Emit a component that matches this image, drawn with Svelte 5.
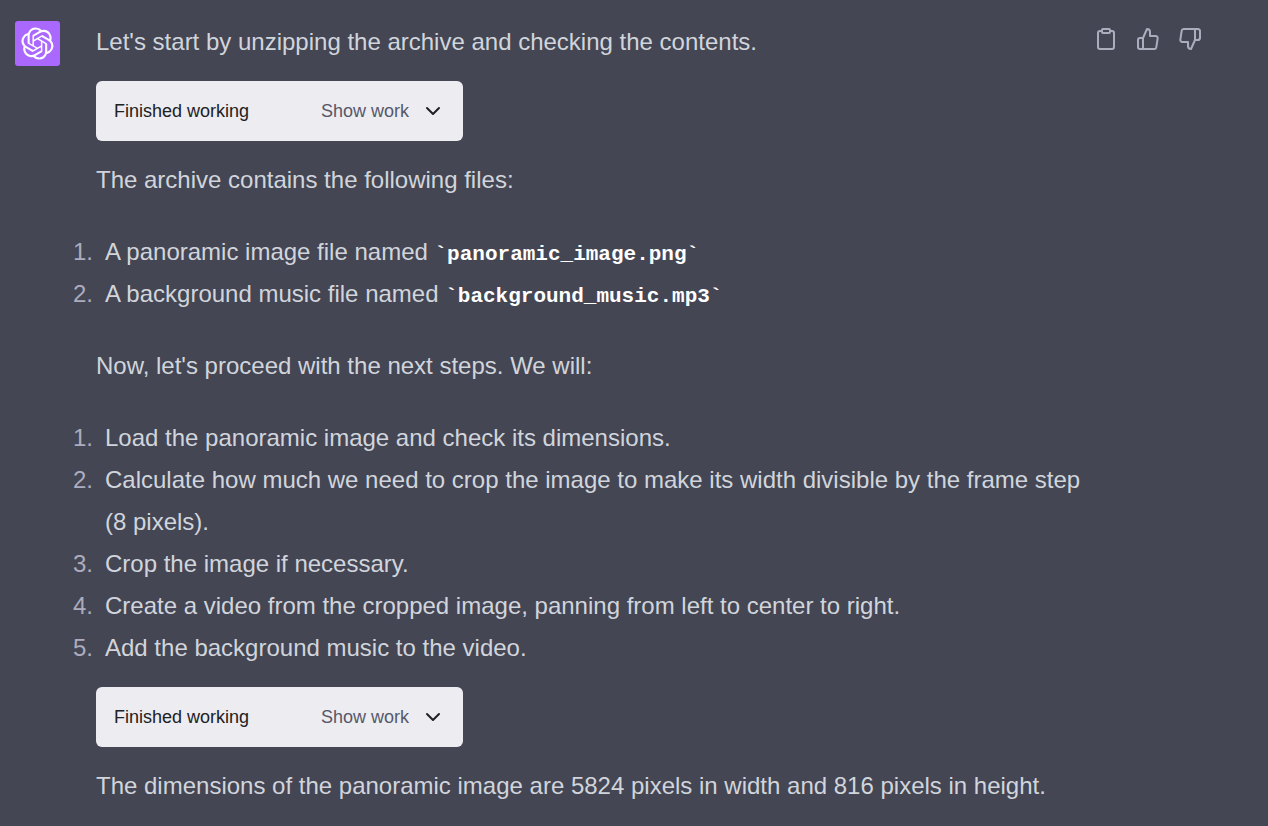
<script>
  const files = [
    ['A panoramic image file named', 'panoramic_image.png'],
    ['A background music file named', 'background_music.mp3'],
  ];
  const steps = [
    'Load the panoramic image and check its dimensions.',
    'Calculate how much we need to crop the image to make its width divisible by the frame step (8 pixels).',
    'Crop the image if necessary.',
    'Create a video from the cropped image, panning from left to center to right.',
    'Add the background music to the video.',
  ];
</script>

{#snippet work()}
  <div class="work">
    <span>Finished working</span>
    <button type="button" class="show">
      Show work
      <svg width="20" height="20" viewBox="0 0 20 20" fill="none" stroke="#202123" stroke-width="2" stroke-linecap="round" stroke-linejoin="round" aria-hidden="true"><path d="M4 7l6 6 6-6" /></svg>
    </button>
  </div>
{/snippet}

<main class="message">
  <div class="avatar">
    <svg width="33" height="33" viewBox="0 0 41 41" fill="#fff" aria-hidden="true"><path d="M37.532 16.87a9.963 9.963 0 0 0-.856-8.184 10.078 10.078 0 0 0-10.855-4.835A9.964 9.964 0 0 0 18.306.5a10.079 10.079 0 0 0-9.614 6.977 9.967 9.967 0 0 0-6.664 4.834 10.08 10.08 0 0 0 1.24 11.817 9.965 9.965 0 0 0 .856 8.185 10.079 10.079 0 0 0 10.855 4.835 9.965 9.965 0 0 0 7.516 3.35 10.078 10.078 0 0 0 9.617-6.981 9.967 9.967 0 0 0 6.663-4.834 10.079 10.079 0 0 0-1.243-11.813zM22.498 37.886a7.474 7.474 0 0 1-4.799-1.735c.061-.033.168-.091.237-.134l7.964-4.6a1.294 1.294 0 0 0 .655-1.134V19.054l3.366 1.944a.12.12 0 0 1 .066.092v9.299a7.505 7.505 0 0 1-7.49 7.496zM6.392 31.006a7.471 7.471 0 0 1-.894-5.023c.06.036.162.099.237.141l7.964 4.6a1.297 1.297 0 0 0 1.308 0l9.724-5.614v3.888a.12.12 0 0 1-.048.103l-8.051 4.649a7.504 7.504 0 0 1-10.24-2.744zM4.297 13.62A7.469 7.469 0 0 1 8.2 10.333c0 .068-.004.19-.004.274v9.201a1.294 1.294 0 0 0 .654 1.132l9.723 5.614-3.366 1.944a.12.12 0 0 1-.114.01L7.04 23.856a7.504 7.504 0 0 1-2.743-10.237zm27.658 6.437l-9.724-5.615 3.367-1.943a.121.121 0 0 1 .113-.01l8.052 4.648a7.498 7.498 0 0 1-1.158 13.528v-9.476a1.293 1.293 0 0 0-.65-1.132zm3.35-5.043c-.059-.037-.162-.099-.236-.141l-7.965-4.6a1.298 1.298 0 0 0-1.308 0l-9.723 5.614v-3.888a.12.12 0 0 1 .048-.103l8.05-4.645a7.497 7.497 0 0 1 11.135 7.763zm-21.063 6.929l-3.367-1.944a.12.12 0 0 1-.065-.092v-9.299a7.497 7.497 0 0 1 12.293-5.756 6.94 6.94 0 0 0-.236.134l-7.965 4.6a1.294 1.294 0 0 0-.654 1.132l-.006 11.225zm1.829-3.943l4.33-2.501 4.332 2.5v5l-4.331 2.5-4.331-2.5V18z" /></svg>
  </div>
  <div class="content">
    <p>Let's start by unzipping the archive and checking the contents.</p>
    {@render work()}
    <p>The archive contains the following files:</p>
    <ol>
      {#each files as [text, name]}
        <li>{text} <code>`{name}`</code></li>
      {/each}
    </ol>
    <p>Now, let's proceed with the next steps. We will:</p>
    <ol class="steps">
      {#each steps as step}<li>{step}</li>{/each}
    </ol>
    {@render work()}
    <p>The dimensions of the panoramic image are 5824 pixels in width and 816 pixels in height.</p>
  </div>
  <div class="actions">
    <button type="button" aria-label="Copy">
      <svg width="24" height="24" viewBox="0 0 24 24"><path d="M16 4h2a2 2 0 0 1 2 2v14a2 2 0 0 1-2 2H6a2 2 0 0 1-2-2V6a2 2 0 0 1 2-2h2" /><rect x="8" y="2" width="8" height="4" rx="1" /></svg>
    </button>
    <button type="button" aria-label="Good response">
      <svg width="24" height="24" viewBox="0 0 24 24"><path d="M14 9V5a3 3 0 0 0-3-3l-4 9v11h11.28a2 2 0 0 0 2-1.7l1.38-9a2 2 0 0 0-2-2.3zM7 22H4a2 2 0 0 1-2-2v-7a2 2 0 0 1 2-2h3" /></svg>
    </button>
    <button type="button" aria-label="Bad response">
      <svg width="24" height="24" viewBox="0 0 24 24"><path d="M10 15v4a3 3 0 0 0 3 3l4-9V2H5.72a2 2 0 0 0-2 1.7l-1.38 9a2 2 0 0 0 2 2.3zm7-13h2.67A2.31 2.31 0 0 1 22 4v7a2.31 2.31 0 0 1-2.33 2H17" /></svg>
    </button>
  </div>
</main>

<style>
  :global(body) { margin: 0; background: #444654; }
  .message {
    display: flex;
    align-items: flex-start;
    padding: 21px 66px 18px 15px;
    color: #d1d5db;
    font: 24px/42px "Liberation Sans", Arial, sans-serif;
  }
  .avatar {
    display: grid;
    place-items: center;
    flex: none;
    width: 45px;
    height: 45px;
    border-radius: 3px;
    background: #ab68ff;
  }
  .content { flex: 1; min-width: 0; margin-left: 36px; }
  p { margin: 0; }
  .work {
    display: flex;
    align-items: center;
    justify-content: space-between;
    box-sizing: border-box;
    width: 367px;
    max-width: 100%;
    height: 60px;
    margin: 18px 0;
    padding: 0 20px 0 18px;
    border-radius: 6px;
    background: #ececf1;
    color: #202123;
    font-size: 18px;
  }
  button { padding: 0; border: 0; background: none; color: inherit; font: inherit; cursor: pointer; }
  .show { display: flex; align-items: center; gap: 14px; color: #565869; }
  ol { margin: 30px 0; padding-left: 9px; }
  .steps { margin-bottom: 0; }
  li::marker { content: counter(list-item) ".\2002"; color: #acacbe; }
  code { color: #fff; font: bold 21px/24px "Liberation Mono", monospace; }
  .actions { display: flex; gap: 18px; padding-top: 6px; }
  .actions button { display: flex; color: #acacbe; }
  .actions svg { fill: none; stroke: currentColor; stroke-width: 2; stroke-linecap: round; stroke-linejoin: round; }
</style>
